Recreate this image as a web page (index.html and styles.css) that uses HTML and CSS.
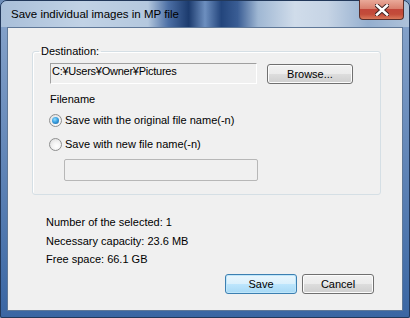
FILE: index.html
```html
<!DOCTYPE html>
<html lang="en">
<head>
<meta charset="UTF-8">
<title>Save individual images in MP file</title>
<link rel="stylesheet" href="styles.css">
</head>
<body>

<div class="window">
  <div class="titlebar">
    <span class="title">Save individual images in MP file</span>
    <div class="close">
      <svg width="14" height="12" viewBox="0 0 14 12">
        <path d="M2 1.5 L12 10.5 M12 1.5 L2 10.5" stroke="#3b1f1f" stroke-width="4.4" stroke-linecap="square"/>
        <path d="M2 1.5 L12 10.5 M12 1.5 L2 10.5" stroke="#ffffff" stroke-width="2.6" stroke-linecap="square"/>
      </svg>
    </div>
  </div>

  <div class="client">
    <fieldset class="group">
      <legend>Destination:</legend>
      <div class="dest-row">
        <div class="path">C:¥Users¥Owner¥Pictures</div>
        <button class="btn browse">Browse...</button>
      </div>
      <div class="label">Filename</div>
      <div class="radio-row"><span class="radio checked"></span>Save with the original file name(-n)</div>
      <div class="radio-row second"><span class="radio"></span>Save with new file name(-n)</div>
      <div class="name-field"></div>
    </fieldset>

    <div class="info">
      <div>Number of the selected: 1</div>
      <div>Necessary capacity: 23.6 MB</div>
      <div>Free space: 66.1 GB</div>
    </div>

    <div class="actions">
      <button class="btn default">Save</button>
      <button class="btn">Cancel</button>
    </div>
  </div>
</div>

</body>
</html>
```

FILE: styles.css
```css
body, html {
  margin: 0;
  height: 100%;
  font-family: 'Liberation Sans', Arial, sans-serif;
  font-size: 11px;
  color: #000;
  background: #6d8db8;
}

.window {
  box-sizing: border-box;
  width: 410px;
  height: 318px;
  border: 1px solid #22385a;
  border-radius: 7px 7px 2px 2px;
  display: flex;
  flex-direction: column;
  background-color: #5f86bb;
  background-image: linear-gradient(#8aa6cc, #3a66a3);
}

/* title bar, glass streaks */
.titlebar {
  height: 26px;
  display: flex;
  align-items: flex-start;
  border-radius: 6px 6px 0 0;
  background-color: #b4c8de;
  background-image: linear-gradient(90deg, #a9bfd9, #c1d2e5 20%, #b4c8de 36%, #4c6fa5 41%, #1c3b6e 46%, #6d8fbf 50%, #23457c 54%, #3a5d94 58%, #9fb7d3 63%, #d0dcea 72%, #c6d4e5 80%, #95afcf 90%, #aec2da);
}

.title {
  margin: 6px 0 0 7px;
  padding: 0 3px;
  font-size: 11.5px;
  line-height: 14px;
  color: #000;
}

.close {
  margin-left: auto;
  margin-right: 5px;
  margin-top: -1px;
  width: 43px;
  height: 19px;
  border: 1px solid #5a2e2a;
  border-top: none;
  border-radius: 0 0 4px 4px;
  background: linear-gradient(#e9a999, #d9806e 45%, #c2473a 50%, #c34c3a 75%, #d9785a);
  display: flex;
  justify-content: center;
  align-items: center;
}

/* client area */
.client {
  margin: 0 6px 6px 6px;
  flex: 1;
  border: 1px solid #5f7898;
  background: #f0f0f0;
  display: flex;
  flex-direction: column;
}

.group {
  margin: 17px 21px 0 24px;
  padding: 0 0 13px 0;
  border: 1px solid #d5dfe5;
  border-radius: 3px;
  box-shadow: inset 1px 1px 0 #fff;
}

.group legend {
  margin-left: 6px;
  padding: 0 2px;
  line-height: 13px;
}

.dest-row {
  display: flex;
  align-items: flex-start;
  margin: 5px 0 0 17px;
}

.path {
  box-sizing: border-box;
  width: 207px;
  height: 21px;
  padding: 1px 0 0 1px;
  line-height: 13px;
  border-top: 1px solid #a0a0a0;
  border-left: 1px solid #a0a0a0;
  border-right: 1px solid #fff;
  border-bottom: 1px solid #fff;
  letter-spacing: -0.25px;
}

.btn {
  box-sizing: border-box;
  width: 72px;
  height: 20px;
  padding: 0;
  font-family: 'Liberation Sans', Arial, sans-serif;
  font-size: 11px;
  color: #000;
  border: 1px solid #707070;
  border-radius: 3px;
  background: linear-gradient(#f2f2f2, #ebebeb 50%, #dddddd 50%, #cfcfcf);
  box-shadow: inset 0 0 0 1px #fcfcfc;
}

.browse {
  width: 86px;
  margin: 1px 0 0 10px;
}

.default {
  border-color: #3c7fb1;
  background: linear-gradient(#eaf6fd, #d9f0fc 50%, #bee6fd 50%, #a7d9f5);
  box-shadow: inset 0 0 0 1px #bfe6fa;
}

.label {
  margin: 9px 0 0 17px;
  line-height: 13px;
}

.radio-row {
  display: flex;
  align-items: center;
  margin: 8px 0 0 16px;
  line-height: 13px;
}

.radio-row.second {
  margin-top: 11px;
}

.radio {
  box-sizing: border-box;
  width: 13px;
  height: 13px;
  margin-right: 3px;
  border: 1px solid #8e8f8f;
  border-radius: 50%;
  background: radial-gradient(circle at 60% 65%, #ffffff, #f4f4f4 40%, #d8d8d8);
  display: flex;
  justify-content: center;
  align-items: center;
}

.radio.checked::after {
  content: '';
  width: 7px;
  height: 7px;
  border-radius: 50%;
  background: radial-gradient(circle at 40% 35%, #8fdcff, #3aa0e0 45%, #1b5c98);
}

.name-field {
  box-sizing: border-box;
  width: 194px;
  height: 22px;
  margin: 8px 0 0 31px;
  border: 1px solid #b7b7b7;
  border-radius: 2px;
}

.info {
  margin: 18px 0 0 38px;
  line-height: 18.5px;
}

.actions {
  margin: auto 28px 16px 0;
  display: flex;
  justify-content: flex-end;
  gap: 5px;
}
```
